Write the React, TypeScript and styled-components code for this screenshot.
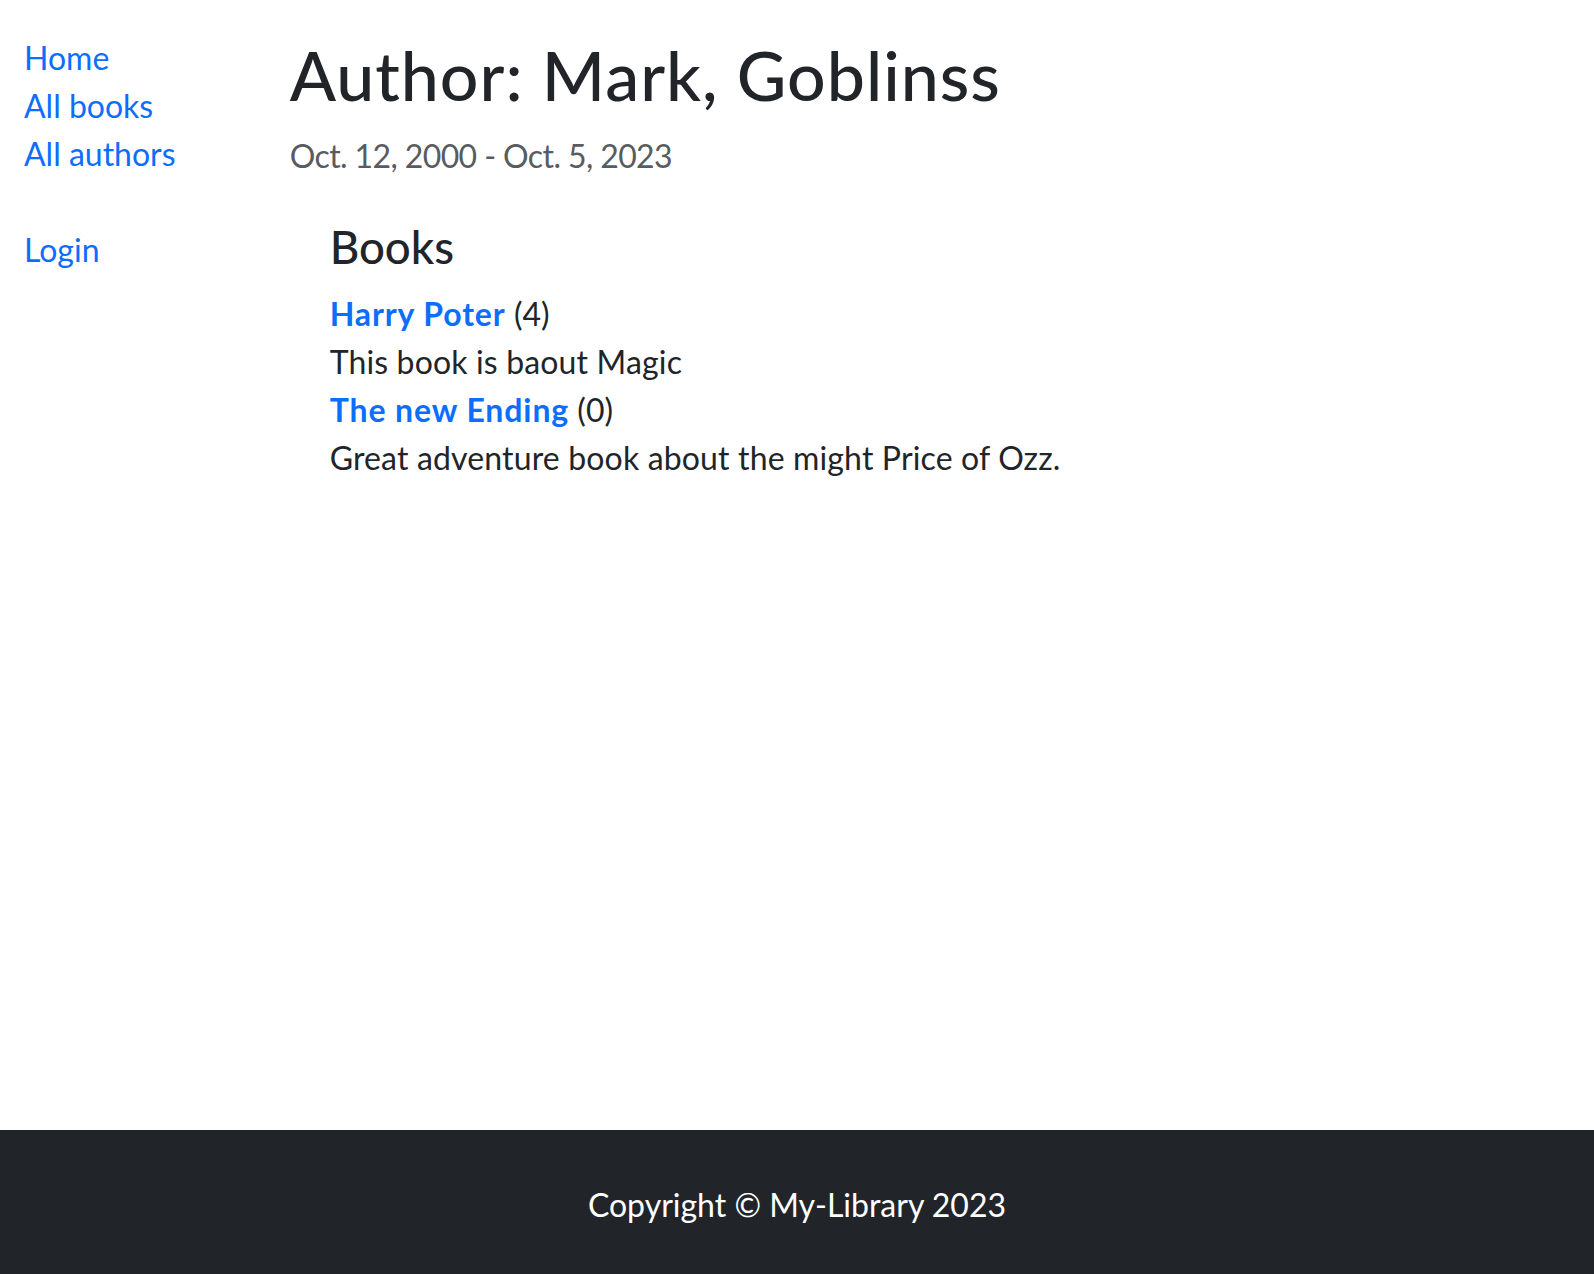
import React from "react";
import styled, { createGlobalStyle } from "styled-components";

const GlobalStyle = createGlobalStyle`
  html, body {
    margin: 0;
    padding: 0;
    background: #fff;
  }
  body {
    font-family: "Segoe UI", Lato, "Open Sans", sans-serif;
    font-size: 32px;
    line-height: 48px;
    color: #212529;
  }
  * { box-sizing: border-box; }
`;

const Page = styled.div`
  min-height: 100vh;
  display: flex;
  flex-direction: column;
`;

const Main = styled.div`
  flex: 1;
  display: grid;
  grid-template-columns: 265.67px 1fr;
  padding-top: 34px;
`;

const Sidebar = styled.nav`
  padding: 0 24px;
  display: flex;
  flex-direction: column;
`;

const NavList = styled.ul`
  list-style: none;
  margin: 0 0 48px;
  padding: 0;
`;

const NavLink = styled.a`
  color: #0d6efd;
  text-decoration: none;
`;

const Content = styled.main`
  padding: 0 24px;
`;

const Title = styled.h1`
  font-size: 68px;
  line-height: 81.6px;
  font-weight: 500;
  letter-spacing: 1px;
  margin: 0 0 16px;
`;

const Dates = styled.p`
  margin: 0 0 40px;
  color: #595c5f;
  letter-spacing: -0.6px;
`;

const BooksSection = styled.section`
  margin: 0 0 0 40px;
`;

const SectionTitle = styled.h4`
  font-size: 45.6px;
  line-height: 54.7px;
  font-weight: 500;
  margin: 0 0 16px;
`;

const BookTitle = styled.div``;

const BookLink = styled.a`
  color: #0d6efd;
  font-weight: 700;
  letter-spacing: 0.9px;
  text-decoration: none;
`;

const BookSummary = styled.div`
  letter-spacing: 0.15px;
`;

const Footer = styled.footer`
  background: #212529;
  color: #fff;
  text-align: center;
  padding: 51px 0 45px;
`;

const books = [
  { title: "Harry Poter", count: 4, summary: "This book is baout Magic" },
  { title: "The new Ending", count: 0, summary: "Great adventure book about the might Price of Ozz." },
];

export default function App() {
  return (
    <Page>
      <GlobalStyle />
      <Main>
        <Sidebar>
          <NavList>
            <li><NavLink href="#">Home</NavLink></li>
            <li><NavLink href="#">All books</NavLink></li>
            <li><NavLink href="#">All authors</NavLink></li>
          </NavList>
          <NavLink href="#">Login</NavLink>
        </Sidebar>
        <Content>
          <Title>Author: Mark, Goblinss</Title>
          <Dates>Oct. 12, 2000 - Oct. 5, 2023</Dates>
          <BooksSection>
            <SectionTitle>Books</SectionTitle>
            {books.map((b) => (
              <React.Fragment key={b.title}>
                <BookTitle>
                  <BookLink href="#">{b.title}</BookLink> ({b.count})
                </BookTitle>
                <BookSummary>{b.summary}</BookSummary>
              </React.Fragment>
            ))}
          </BooksSection>
        </Content>
      </Main>
      <Footer>Copyright © My-Library 2023</Footer>
    </Page>
  );
}
